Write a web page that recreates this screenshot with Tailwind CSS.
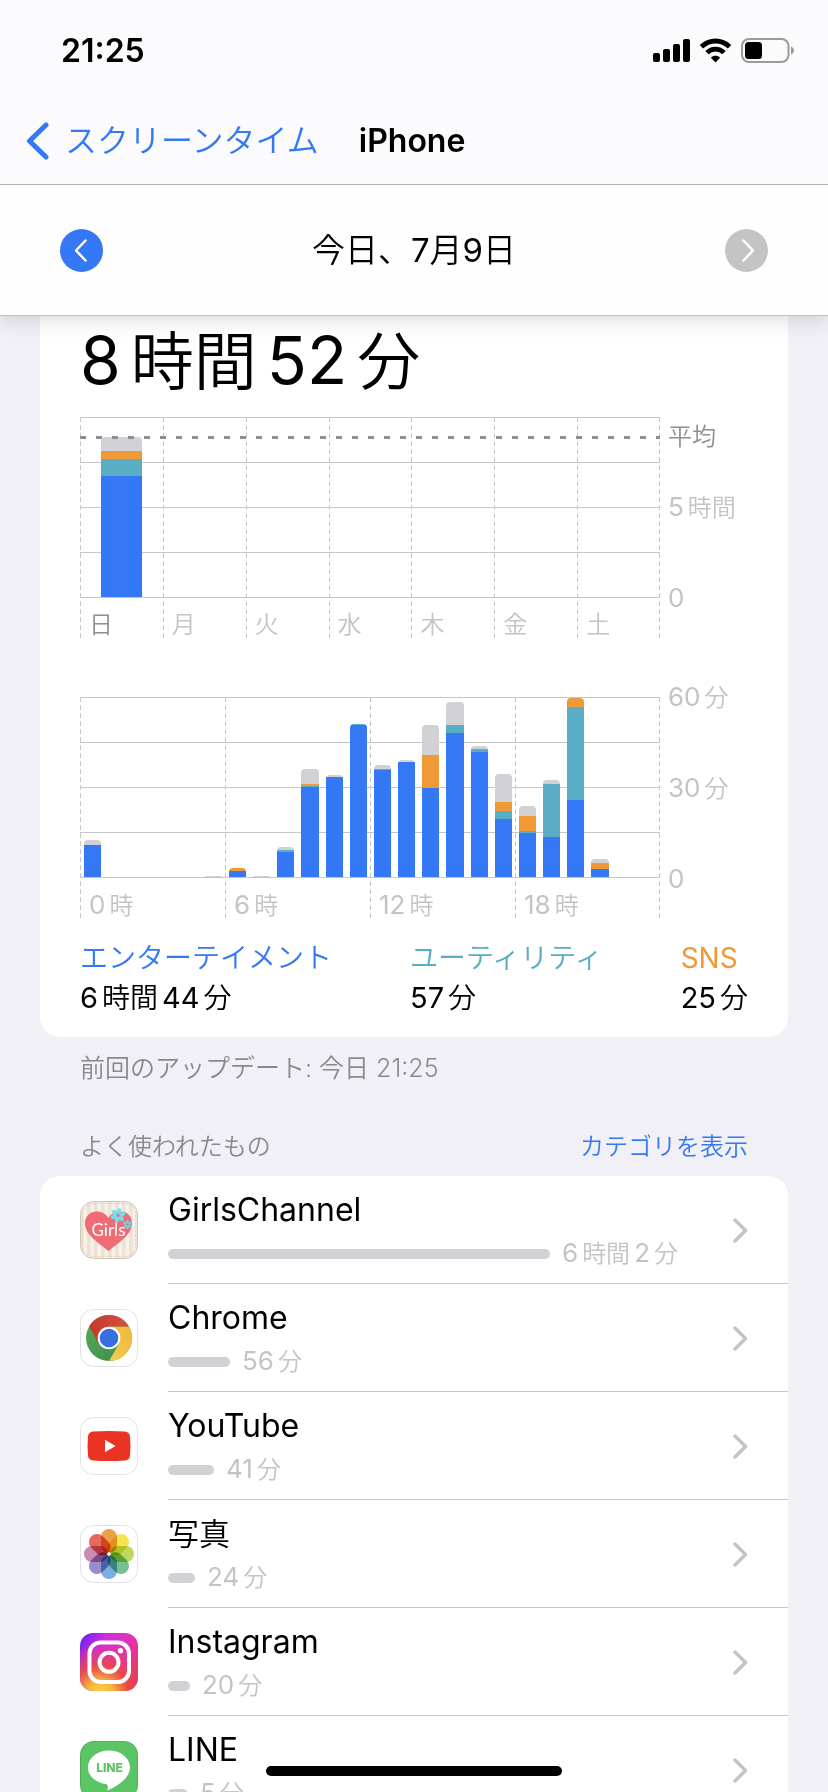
<!DOCTYPE html>
<html lang="ja">
<head>
  <meta charset="UTF-8" />
  <meta name="viewport" content="width=device-width, initial-scale=1" />
  <title>スクリーンタイム - iPhone</title>
  <script src="https://cdn.jsdelivr.net/npm/@tailwindcss/browser@4"></script>
</head>
<body class="h-screen overflow-hidden flex flex-col bg-[#f1f0f6] text-black font-['Inter','Noto_Sans_CJK_JP',sans-serif]">

  <!-- Header -->
  <header class="relative z-10 shrink-0 bg-[#fbfbfd] border-b border-[#c3c3c6] shadow-[0_4px_20px_rgba(0,0,0,0.14)]">
    <!-- Status bar -->
    <div class="flex items-center justify-between h-[102px] pl-[61px] pr-[33px]">
      <span class="text-[32px] leading-10 font-semibold">21:25</span>
      <svg class="w-[142px] h-[26px]" viewBox="0 0 142 26" fill="none">
        <g fill="#000">
          <rect x="0" y="15" width="7" height="9" rx="2" />
          <rect x="10" y="11" width="7" height="13" rx="2" />
          <rect x="20" y="6" width="7" height="18" rx="2" />
          <rect x="30" y="1" width="7" height="23" rx="2" />
          <path d="M62.5 24.5l-4.6-4.8c2.6-2.6 6.600-2.600 9.200 0z" />
          <rect x="92" y="4" width="17" height="17" rx="3.500" />
        </g>
        <path d="M48.400 8.800a20 20 0 0 1 28.200 0M54 14.600a12 12 0 0 1 17 0" stroke="#000" stroke-width="4.800" />
        <rect x="89" y="1" width="46.500" height="23" rx="7" stroke="#9b9b9c" stroke-width="2" />
        <path d="M138 8.500c4 1.500 4 6.500 0 8z" fill="#9b9b9c" />
      </svg>
    </div>

    <!-- Navigation -->
    <nav class="flex items-center h-[83px] pb-1 pl-[26px] gap-10 border-b border-[#b2b2b4]">
      <a href="#" class="flex items-center gap-4 text-[#3478f6] text-[32px] leading-10">
        <svg class="w-[23px] h-[38px]" viewBox="0 0 23 38" fill="none" stroke="currentColor" stroke-width="5" stroke-linecap="round" stroke-linejoin="round"><path d="M20 3L3.500 19L20 35" /></svg>
        <span class="font-[350]">スクリーンタイム</span>
      </a>
      <h1 class="text-[32px] leading-10 font-semibold">iPhone</h1>
    </nav>

    <!-- Date picker -->
    <div class="flex items-center justify-between h-[130px] px-[60px] bg-[#fefefe]">
      <button type="button" aria-label="前の日" class="flex items-center justify-center size-[43px] rounded-full bg-[#3478f6]">
        <svg class="w-[14px] h-[23px]" viewBox="0 0 14 23" fill="none" stroke="#fff" stroke-width="2.500" stroke-linecap="round" stroke-linejoin="round"><path d="M10.500 1.500L1 11.500L10.500 21.500" /></svg>
      </button>
      <p class="flex items-baseline text-[33px] leading-10 font-[350]">今日、<span class="font-normal">7</span>月<span class="font-normal">9</span>日</p>
      <button type="button" aria-label="次の日" disabled class="flex items-center justify-center size-[43px] rounded-full bg-[#c4c4c6]">
        <svg class="w-[14px] h-[23px]" viewBox="0 0 14 23" fill="none" stroke="#fff" stroke-width="2.500" stroke-linecap="round" stroke-linejoin="round"><path d="M3.500 1.500L13 11.500L3.500 21.500" /></svg>
      </button>
    </div>
  </header>

  <main class="flex-1 min-h-0 overflow-hidden px-10">

    <!-- Usage card -->
    <section class="bg-white rounded-b-[20px] px-10 pt-2 pb-[19px]">
      <p class="flex items-baseline gap-[10px] text-[66px] leading-[72px]">8<span class="text-[63px] font-[350]">時間</span>52<span class="text-[63px] font-[350]">分</span></p>

      <!-- Week chart -->
      <div class="mt-5 flex text-[24px] leading-9 text-[#c4c4c6]">
        <div class="relative flex-1">
          <div class="absolute inset-x-0 top-0 h-[181px] flex flex-col justify-between">
            <i class="h-px bg-[#c6c6c8]"></i><i class="h-px bg-[#c6c6c8]"></i><i class="h-px bg-[#c6c6c8]"></i><i class="h-px bg-[#c6c6c8]"></i><i class="h-px bg-[#c6c6c8]"></i>
          </div>
          <div class="relative grid grid-cols-7 h-[221px] leading-6 font-[350] bg-[repeating-linear-gradient(to_bottom,#c6c6c8_0_5px,transparent_5px_8px)] bg-[length:1px_100%] bg-right bg-no-repeat">
            <div class="day flex flex-col"><div id="today" class="h-[180px] flex flex-col justify-end w-[41px] ml-[21px]"></div><span class="pl-[9px] pt-4 text-[#8e8e93]">日</span></div>
            <div class="day pt-[196px] pl-[9px]">月</div>
            <div class="day pt-[196px] pl-[9px]">火</div>
            <div class="day pt-[196px] pl-[9px]">水</div>
            <div class="day pt-[196px] pl-[9px]">木</div>
            <div class="day pt-[196px] pl-[9px]">金</div>
            <div class="day pt-[196px] pl-[9px]">土</div>
          </div>
          <!-- Average line -->
          <div class="absolute inset-x-0 top-[19px] h-[3px] bg-[repeating-linear-gradient(to_right,#8e8e93_0_6px,transparent_6px_16px)]"></div>
        </div>
        <div class="w-[88px] pl-2 pt-[2px]">
          <p class="font-[350] text-[#8e8e93]">平均</p>
          <p class="mt-[34px] flex items-baseline gap-1 text-[26px]">5<span class="text-[24px] font-[350]">時間</span></p>
          <p class="mt-[54px] text-[26px]">0</p>
        </div>
      </div>

      <!-- Day chart -->
      <div class="mt-[59px] flex text-[26px] leading-9 text-[#c4c4c6]">
        <div class="relative flex-1">
          <div class="absolute inset-x-0 top-0 h-[181px] flex flex-col justify-between">
            <i class="h-px bg-[#c6c6c8]"></i><i class="h-px bg-[#c6c6c8]"></i><i class="h-px bg-[#c6c6c8]"></i><i class="h-px bg-[#c6c6c8]"></i><i class="h-px bg-[#c6c6c8]"></i>
          </div>
          <div class="grid grid-cols-4 h-[221px] leading-6 bg-[repeating-linear-gradient(to_bottom,#c6c6c8_0_5px,transparent_5px_8px)] bg-[length:1px_100%] bg-right bg-no-repeat">
            <div class="quarter pt-[196px] pl-[9px]"><p class="flex items-baseline gap-1">0<span class="text-[24px] font-[350]">時</span></p></div>
            <div class="quarter pt-[196px] pl-[9px]"><p class="flex items-baseline gap-1">6<span class="text-[24px] font-[350]">時</span></p></div>
            <div class="quarter pt-[196px] pl-[9px]"><p class="flex items-baseline gap-1">12<span class="text-[24px] font-[350]">時</span></p></div>
            <div class="quarter pt-[196px] pl-[9px]"><p class="flex items-baseline gap-1">18<span class="text-[24px] font-[350]">時</span></p></div>
          </div>
          <div id="hours" class="absolute inset-x-0 top-0 h-[180px] grid grid-cols-24"></div>
        </div>
        <div class="w-[88px] pl-2 -mt-[18px]">
          <p class="flex items-baseline gap-1">60<span class="text-[24px] font-[350]">分</span></p>
          <p class="mt-[54px] flex items-baseline gap-1">30<span class="text-[24px] font-[350]">分</span></p>
          <p class="mt-[54px]">0</p>
        </div>
      </div>

      <!-- Categories -->
      <dl class="mt-5 flex justify-between text-[29px] leading-10">
        <div>
          <dt class="text-[28px] text-[#3478f6] font-[350]">エンターテイメント</dt>
          <dd class="flex items-baseline gap-1">6<span class="text-[28px] font-[350]">時間</span>44<span class="text-[28px] font-[350]">分</span></dd>
        </div>
        <div>
          <dt class="text-[28px] text-[#59adc4] font-[350]">ユーティリティ</dt>
          <dd class="flex items-baseline gap-1">57<span class="text-[28px] font-[350]">分</span></dd>
        </div>
        <div>
          <dt class="text-[28px] text-[#f09a37]">SNS</dt>
          <dd class="flex items-baseline gap-1">25<span class="text-[28px] font-[350]">分</span></dd>
        </div>
      </dl>
    </section>

    <p class="mt-[13px] px-10 text-[25px] leading-9 font-[350] text-[#8a8a8e]">前回のアップデート: 今日 21:25</p>

    <!-- Most used -->
    <div class="mt-[43px] px-10 flex justify-between text-[24px] leading-9">
      <h2 class="text-[#8a8a8e] font-[350]">よく使われたもの</h2>
      <a href="#" class="text-[#3478f6] font-[350]">カテゴリを表示</a>
    </div>

    <ul class="mt-[11px] bg-white rounded-t-[20px]">
      <li>
        <a href="#" class="flex pl-10">
          <svg class="mt-[25px] size-[58px] shrink-0" viewBox="0 0 58 58">
            <defs>
              <pattern id="stripes" width="7" height="58" patternUnits="userSpaceOnUse"><rect width="7" height="58" fill="#f6f1e9" /><rect width="3.500" height="58" fill="#ece2d6" /></pattern>
              <g id="petals"><ellipse cy="-4.600" rx="2.200" ry="3.200" /><ellipse cy="-4.600" rx="2.200" ry="3.200" transform="rotate(60)" /><ellipse cy="-4.600" rx="2.200" ry="3.200" transform="rotate(120)" /><ellipse cy="-4.600" rx="2.200" ry="3.200" transform="rotate(180)" /><ellipse cy="-4.600" rx="2.200" ry="3.200" transform="rotate(240)" /><ellipse cy="-4.600" rx="2.200" ry="3.200" transform="rotate(300)" /></g>
            </defs>
            <rect x=".5" y=".5" width="57" height="57" rx="13" fill="url(#stripes)" stroke="#cbc6c0" />
            <rect x="2.500" y="2.500" width="53" height="53" rx="11" fill="none" stroke="#ecd3a4" stroke-dasharray="2.500 1.500" />
            <path d="M28.500 50C20 43 5 34 5 22.500C5 15 10 10.500 16.500 10.500C22 10.500 26 13 28.500 17C31 13 35 10.500 40.500 10.500C47 10.500 52 15 52 22.500C52 34 37 43 28.500 50Z" fill="#f06c74" />
            <use href="#petals" fill="#6fe0ec" transform="translate(38 14.500) rotate(12) scale(.95)" />
            <use href="#petals" fill="#5fd8e8" transform="translate(47.500 23.500) scale(.6)" />
            <text x="28.500" y="34.500" text-anchor="middle" class="font-['Lato',sans-serif] text-[17px]" fill="#fff">Girls</text>
          </svg>
          <div class="ml-[30px] flex-1 h-[108px] pt-3 pr-10 border-b border-[#c6c6c8] flex justify-between">
            <div>
              <p class="text-[32px] leading-[44px]">GirlsChannel</p>
              <div class="flex items-center gap-3 text-[26px] leading-9 text-[#c4c4c6] pt-[3px]"><i class="h-[10px] w-[382px] rounded-full bg-[#d1d1d6]"></i><p class="flex items-baseline gap-1">6<span class="text-[24px] font-[350]">時間</span>2<span class="text-[24px] font-[350]">分</span></p></div>
            </div>
            <svg class="mt-[30px] w-[15px] h-[25px]" viewBox="0 0 15 25" fill="none" stroke="#c4c4c6" stroke-width="3.500" stroke-linecap="round" stroke-linejoin="round"><path d="M2 2L12.500 12.500L2 23" /></svg>
          </div>
        </a>
      </li>
      <li>
        <a href="#" class="flex pl-10">
          <svg class="mt-[25px] size-[58px] shrink-0" viewBox="0 0 58 58">
            <defs>
              <linearGradient id="cr" x1="0" x2="1"><stop stop-color="#c13a2c" /><stop offset="1" stop-color="#d9503f" /></linearGradient>
              <linearGradient id="cg" x1="0" y1="0" x2="1" y2="1"><stop stop-color="#5bab5d" /><stop offset="1" stop-color="#3c8a45" /></linearGradient>
              <linearGradient id="cy" x1="1" y1="0" x2="0" y2="1"><stop stop-color="#efb83c" /><stop offset="1" stop-color="#f5cc54" /></linearGradient>
            </defs>
            <rect x=".5" y=".5" width="57" height="57" rx="13" fill="#fff" stroke="#e1e1e3" />
            <circle cx="29" cy="29" r="23" fill="url(#cg)" />
            <path d="M29 17.500H49A23 23 0 0 1 29 52L39 34.700Z" fill="url(#cy)" />
            <path d="M9.100 17.500A23 23 0 0 1 48.900 17.500H29L19 34.700Z" fill="url(#cr)" />
            <circle cx="29" cy="29" r="11.300" fill="#fff" />
            <circle cx="29" cy="29" r="9.300" fill="#386fdf" />
          </svg>
          <div class="ml-[30px] flex-1 h-[108px] pt-3 pr-10 border-b border-[#c6c6c8] flex justify-between">
            <div>
              <p class="text-[32px] leading-[44px]">Chrome</p>
              <div class="flex items-center gap-3 text-[26px] leading-9 text-[#c4c4c6] pt-[3px]"><i class="h-[10px] w-[62px] rounded-full bg-[#d1d1d6]"></i><p class="flex items-baseline gap-1">56<span class="text-[24px] font-[350]">分</span></p></div>
            </div>
            <svg class="mt-[30px] w-[15px] h-[25px]" viewBox="0 0 15 25" fill="none" stroke="#c4c4c6" stroke-width="3.500" stroke-linecap="round" stroke-linejoin="round"><path d="M2 2L12.500 12.500L2 23" /></svg>
          </div>
        </a>
      </li>
      <li>
        <a href="#" class="flex pl-10">
          <svg class="mt-[25px] size-[58px] shrink-0" viewBox="0 0 58 58">
            <rect x=".5" y=".5" width="57" height="57" rx="13" fill="#fff" stroke="#e1e1e3" />
            <path d="M13 14.500Q29 13.500 45 14.500Q49.500 15 50 19.500Q51 29 50 38.500Q49.500 43 45 43.500Q29 44.500 13 43.500Q8.500 43 8 38.500Q7 29 8 19.500Q8.500 15 13 14.500Z" fill="#ea3323" />
            <path d="M25 22.700V35.300L35.500 29Z" fill="#fff" />
          </svg>
          <div class="ml-[30px] flex-1 h-[108px] pt-3 pr-10 border-b border-[#c6c6c8] flex justify-between">
            <div>
              <p class="text-[32px] leading-[44px]">YouTube</p>
              <div class="flex items-center gap-3 text-[26px] leading-9 text-[#c4c4c6] pt-[3px]"><i class="h-[10px] w-[46px] rounded-full bg-[#d1d1d6]"></i><p class="flex items-baseline gap-1">41<span class="text-[24px] font-[350]">分</span></p></div>
            </div>
            <svg class="mt-[30px] w-[15px] h-[25px]" viewBox="0 0 15 25" fill="none" stroke="#c4c4c6" stroke-width="3.500" stroke-linecap="round" stroke-linejoin="round"><path d="M2 2L12.500 12.500L2 23" /></svg>
          </div>
        </a>
      </li>
      <li>
        <a href="#" class="flex pl-10">
          <svg class="mt-[25px] size-[58px] shrink-0" viewBox="0 0 58 58">
            <rect x=".5" y=".5" width="57" height="57" rx="13" fill="#fff" stroke="#e1e1e3" />
            <g class="isolate *:mix-blend-multiply">
              <rect x="21" y="4" width="16" height="24" rx="8" fill="#eda04a" />
              <rect x="21" y="4" width="16" height="24" rx="8" fill="#f5e451" transform="rotate(45 29 29)" />
              <rect x="21" y="4" width="16" height="24" rx="8" fill="#bdd85c" transform="rotate(90 29 29)" />
              <rect x="21" y="4" width="16" height="24" rx="8" fill="#78bf92" transform="rotate(135 29 29)" />
              <rect x="21" y="4" width="16" height="24" rx="8" fill="#7aaee2" transform="rotate(180 29 29)" />
              <rect x="21" y="4" width="16" height="24" rx="8" fill="#9a8cc6" transform="rotate(225 29 29)" />
              <rect x="21" y="4" width="16" height="24" rx="8" fill="#c98ab4" transform="rotate(270 29 29)" />
              <rect x="21" y="4" width="16" height="24" rx="8" fill="#e5695c" transform="rotate(315 29 29)" />
            </g>
            <circle cx="29" cy="29" r="1.800" fill="#fff" />
          </svg>
          <div class="ml-[30px] flex-1 h-[108px] pt-3 pr-10 border-b border-[#c6c6c8] flex justify-between">
            <div>
              <p class="text-[31px] leading-[44px] font-[350]">写真</p>
              <div class="flex items-center gap-3 text-[26px] leading-9 text-[#c4c4c6] pt-[3px]"><i class="h-[10px] w-[27px] rounded-full bg-[#d1d1d6]"></i><p class="flex items-baseline gap-1">24<span class="text-[24px] font-[350]">分</span></p></div>
            </div>
            <svg class="mt-[30px] w-[15px] h-[25px]" viewBox="0 0 15 25" fill="none" stroke="#c4c4c6" stroke-width="3.500" stroke-linecap="round" stroke-linejoin="round"><path d="M2 2L12.500 12.500L2 23" /></svg>
          </div>
        </a>
      </li>
      <li>
        <a href="#" class="flex pl-10">
          <svg class="mt-[25px] size-[58px] shrink-0" viewBox="0 0 58 58">
            <defs>
              <linearGradient id="ig" x1="0" y1="0" x2="1" y2=".6"><stop stop-color="#5a1ff5" /><stop offset=".35" stop-color="#d02ee0" /><stop offset=".75" stop-color="#e632a8" /><stop offset="1" stop-color="#e23a6a" /></linearGradient>
              <radialGradient id="ig2" cx=".35" cy="1.050" r=".9"><stop stop-color="#fbd34a" /><stop offset=".25" stop-color="#f6b63c" /><stop offset=".55" stop-color="#ec4a3c" stop-opacity=".85" /><stop offset="1" stop-color="#e8337a" stop-opacity="0" /></radialGradient>
            </defs>
            <rect width="58" height="58" rx="13" fill="url(#ig)" />
            <rect width="58" height="58" rx="13" fill="url(#ig2)" />
            <g fill="none" stroke="#fff" stroke-width="4"><rect x="9.500" y="9.500" width="39.500" height="39.500" rx="11" /><circle cx="29" cy="29.300" r="9.500" /></g>
            <circle cx="40.500" cy="17.800" r="2.700" fill="#fff" />
          </svg>
          <div class="ml-[30px] flex-1 h-[108px] pt-3 pr-10 border-b border-[#c6c6c8] flex justify-between">
            <div>
              <p class="text-[32px] leading-[44px]">Instagram</p>
              <div class="flex items-center gap-3 text-[26px] leading-9 text-[#c4c4c6] pt-[3px]"><i class="h-[10px] w-[22px] rounded-full bg-[#d1d1d6]"></i><p class="flex items-baseline gap-1">20<span class="text-[24px] font-[350]">分</span></p></div>
            </div>
            <svg class="mt-[30px] w-[15px] h-[25px]" viewBox="0 0 15 25" fill="none" stroke="#c4c4c6" stroke-width="3.500" stroke-linecap="round" stroke-linejoin="round"><path d="M2 2L12.500 12.500L2 23" /></svg>
          </div>
        </a>
      </li>
      <li>
        <a href="#" class="flex pl-10">
          <svg class="mt-[25px] size-[58px] shrink-0" viewBox="0 0 58 58">
            <rect x=".5" y=".5" width="57" height="57" rx="13" fill="#5bc465" stroke="#4fae59" />
            <path d="M29 9.500C17.500 9.500 8 17 8 26.500C8 35 15.500 41.500 25.500 43C28 43.500 28 45 27.500 49.500C36 45.500 50 38 50 26.500C50 17 40.500 9.500 29 9.500Z" fill="#fff" />
            <text x="29.500" y="31" text-anchor="middle" class="font-['Inter',sans-serif] text-[12px] font-extrabold" fill="#5bc465">LINE</text>
          </svg>
          <div class="ml-[30px] flex-1 h-[108px] pt-3 pr-10 flex justify-between">
            <div>
              <p class="text-[32px] leading-[44px]">LINE</p>
              <div class="flex items-center gap-3 text-[26px] leading-9 text-[#c4c4c6] pt-[3px]"><i class="h-[10px] w-[20px] rounded-full bg-[#d1d1d6]"></i><p class="flex items-baseline gap-1">5<span class="text-[24px] font-[350]">分</span></p></div>
            </div>
            <svg class="mt-[30px] w-[15px] h-[25px]" viewBox="0 0 15 25" fill="none" stroke="#c4c4c6" stroke-width="3.500" stroke-linecap="round" stroke-linejoin="round"><path d="M2 2L12.500 12.500L2 23" /></svg>
          </div>
        </a>
      </li>
    </ul>
  </main>

  <!-- Home indicator -->
  <div class="fixed bottom-4 left-1/2 -translate-x-1/2 z-20 w-[296px] h-[10px] rounded-full bg-black"></div>

  <script>
    const dash = 'bg-[repeating-linear-gradient(to_bottom,#c6c6c8_0_5px,transparent_5px_8px)] bg-[length:1px_100%] bg-left bg-no-repeat';
    document.querySelectorAll('.day, .quarter').forEach((el) => el.classList.add(...dash.split(' ')));

    // other, sns, utility, entertainment
    const colors = ['bg-[#d1d1d6]', 'bg-[#f09a37]', 'bg-[#59adc4]', 'bg-[#3478f6]'];

    function stack(values) {
      const parts = values.map((v, i) => v ? `<div class="${colors[i]}" style="height:${v}px"></div>` : '');
      return `<div class="overflow-hidden rounded-t-[4px]">${parts.join('')}</div>`;
    }

    document.getElementById('today').innerHTML = stack([14, 8, 17, 121]);

    const hours = {
      0: [5, 0, 0, 32], 5: [1, 0, 0, 0], 6: [0, 3, 0, 6], 7: [1, 0, 0, 0],
      8: [3, 0, 2, 25], 9: [15, 2, 1, 90], 10: [2, 0, 0, 100], 11: [0, 0, 1, 152],
      12: [4, 0, 1, 107], 13: [2, 0, 0, 115], 14: [30, 33, 0, 89], 15: [23, 0, 8, 144],
      16: [3, 0, 3, 125], 17: [28, 9, 8, 58], 18: [10, 15, 2, 44], 19: [4, 0, 53, 40],
      20: [0, 9, 93, 77], 21: [4, 6, 0, 8]
    };
    let html = '';
    for (let h = 0; h < 24; h++) {
      html += `<div class="flex flex-col justify-end pl-1 pr-[3px]">${hours[h] ? stack(hours[h]) : ''}</div>`;
    }
    document.getElementById('hours').innerHTML = html;
  </script>
</body>
</html>
